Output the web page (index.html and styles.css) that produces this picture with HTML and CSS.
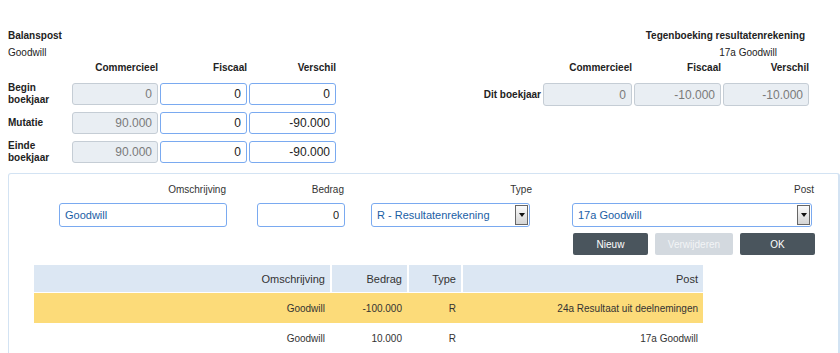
FILE: index.html
```html
<!DOCTYPE html>
<html>
  <head>
    <title>Balanspost</title>
    <link rel="stylesheet" href="styles.css">
  </head>
  <body>
    <div class="top">
      <div class="balans">
        <div class="title">Balanspost</div>
        <div class="sub">Goodwill</div>
        <div class="grid">
          <span></span>
          <span class="colhead">Commercieel</span>
          <span class="colhead">Fiscaal</span>
          <span class="colhead">Verschil</span>

          <span class="rowlabel">Begin boekjaar</span>
          <input class="field ro" value="0" readonly>
          <input class="field" value="0">
          <input class="field" value="0">

          <span class="rowlabel">Mutatie</span>
          <input class="field ro" value="90.000" readonly>
          <input class="field" value="0">
          <input class="field" value="-90.000">

          <span class="rowlabel">Einde boekjaar</span>
          <input class="field ro" value="90.000" readonly>
          <input class="field" value="0">
          <input class="field" value="-90.000">
        </div>
      </div>

      <div class="tegen">
        <div class="title right">Tegenboeking resultatenrekening</div>
        <div class="sub right post-name">17a Goodwill</div>
        <div class="grid grid-right">
          <span></span>
          <span class="colhead">Commercieel</span>
          <span class="colhead">Fiscaal</span>
          <span class="colhead">Verschil</span>

          <span class="rowlabel single">Dit boekjaar</span>
          <input class="field ro" value="0" readonly>
          <input class="field ro" value="-10.000" readonly>
          <input class="field ro" value="-10.000" readonly>
        </div>
      </div>
    </div>

    <div class="panel">
      <div class="form-row">
        <div class="form-group f-omschrijving">
          <label for="omschrijving">Omschrijving</label>
          <input type="text" id="omschrijving" class="text-input" value="Goodwill">
        </div>
        <div class="form-group f-bedrag">
          <label for="bedrag">Bedrag</label>
          <input type="text" id="bedrag" class="text-input num" value="0">
        </div>
        <div class="form-group f-type">
          <label>Type</label>
          <div class="select">
            <span class="select-value">R - Resultatenrekening</span>
            <span class="select-btn"><span class="arrow"></span></span>
          </div>
        </div>
        <div class="form-group f-post">
          <label>Post</label>
          <div class="select">
            <span class="select-value">17a Goodwill</span>
            <span class="select-btn"><span class="arrow"></span></span>
          </div>
        </div>
      </div>

      <div class="btns">
        <button class="btn">Nieuw</button>
        <button class="btn disabled" disabled>Verwijderen</button>
        <button class="btn">OK</button>
      </div>

      <table class="posts">
        <thead>
          <tr>
            <th class="c-oms">Omschrijving</th>
            <th class="c-bed">Bedrag</th>
            <th class="c-type">Type</th>
            <th class="c-post">Post</th>
          </tr>
        </thead>
        <tbody>
          <tr class="selected">
            <td>Goodwill</td>
            <td>-100.000</td>
            <td>R</td>
            <td>24a Resultaat uit deelnemingen</td>
          </tr>
          <tr>
            <td>Goodwill</td>
            <td>10.000</td>
            <td>R</td>
            <td>17a Goodwill</td>
          </tr>
        </tbody>
      </table>
    </div>
  </body>
</html>
```

FILE: styles.css
```css
body {
  font-family: "Liberation Sans", Arial, sans-serif;
  margin: 0;
  padding: 0;
  background-color: #fff;
  color: #222;
  overflow: hidden;
}

.top {
  display: flex;
  justify-content: space-between;
  padding: 28px 31px 0 8px;
}

.title {
  font-size: 10px;
  font-weight: bold;
  line-height: 16px;
  height: 17px;
}
.sub {
  font-size: 10px;
  line-height: 16px;
  height: 17px;
}
.right {
  text-align: right;
  padding-right: 4px;
}
.post-name {
  padding-right: 32px;
}

.grid {
  display: grid;
  grid-template-columns: 62px 86px 87px 87px;
  grid-template-rows: 13px 22px 22px 22px;
  column-gap: 2px;
  row-gap: 7px;
  margin-top: 1px;
}
.grid-right {
  grid-template-columns: 58px 89px 87px 86px;
  grid-template-rows: 13px 23px;
}

.colhead {
  font-size: 10px;
  font-weight: bold;
  text-align: right;
  line-height: 13px;
  margin-top: -2px;
}
.rowlabel {
  font-size: 10px;
  font-weight: bold;
  line-height: 12px;
  align-self: center;
}
.rowlabel.single {
  text-align: right;
}

.field {
  box-sizing: border-box;
  width: 100%;
  height: 100%;
  margin: 0;
  border: 1px solid #7aaaf0;
  border-radius: 3px;
  background: #fff;
  font-family: inherit;
  font-size: 12px;
  color: #222;
  text-align: right;
  padding: 0 5px;
  outline: none;
}
.field.ro {
  background-color: #e9eef3;
  border-color: #c5cdd5;
  color: #7a7a7a;
}

.panel {
  margin: 10px 0 0 8px;
  border: 1px solid #d3e3f3;
  border-right-width: 2px;
  border-bottom: none;
  border-radius: 3px 3px 0 0;
  padding: 9px 0 20px 0;
}

.form-row {
  display: flex;
  padding-left: 50px;
}
.form-group {
  display: flex;
  flex-direction: column;
}
.form-group > label {
  font-size: 10px;
  line-height: 14px;
  text-align: right;
  color: #333;
  margin-bottom: 6px;
  margin-right: 1px;
}
.f-omschrijving { width: 168px; }
.f-bedrag { width: 88px; margin-left: 30px; }
.f-type { width: 159px; margin-left: 26px; }
.f-post { width: 240px; margin-left: 42px; }
.f-type > label,
.f-post > label {
  margin-right: -2px;
}

.text-input {
  box-sizing: border-box;
  height: 24px;
  margin: 0;
  border: 1px solid #7aaaf0;
  border-radius: 3px;
  font-family: inherit;
  font-size: 11px;
  color: #1b5ea5;
  padding: 0 5px;
  outline: none;
}
.text-input.num {
  text-align: right;
  color: #222;
}

.select {
  box-sizing: border-box;
  height: 24px;
  border: 1px solid #7aaaf0;
  border-radius: 3px;
  display: flex;
  align-items: stretch;
  padding: 1px;
}
.select-value {
  flex: 1;
  font-size: 11px;
  line-height: 20px;
  color: #1b5ea5;
  padding-left: 4px;
}
.select-btn {
  box-sizing: border-box;
  width: 13px;
  border: 1px solid #666;
  background: linear-gradient(#fbfbfb, #d4d4d4);
  display: flex;
  align-items: center;
  justify-content: center;
}
.arrow {
  width: 0;
  height: 0;
  border-left: 3px solid transparent;
  border-right: 3px solid transparent;
  border-top: 4px solid #111;
}

.btns {
  display: flex;
  justify-content: flex-end;
  gap: 7px;
  margin: 6px 23px 0 0;
}
.btn {
  height: 22px;
  width: 75px;
  border: none;
  border-radius: 2px;
  background-color: #4a555d;
  color: #fff;
  font-family: inherit;
  font-size: 10px;
  padding: 0;
  cursor: pointer;
}
.btn.disabled {
  width: 78px;
  background-color: #d3d9df;
  color: #f2f4f6;
  cursor: default;
}

table.posts {
  margin: 10px 0 0 25px;
  width: 669px;
  border-collapse: separate;
  border-spacing: 0;
  table-layout: fixed;
}
.posts th {
  background-color: #dce7f3;
  font-weight: normal;
  font-size: 11px;
  color: #333;
  text-align: right;
  height: 27px;
  padding: 0 5px 0 0;
  border-left: 2px solid #fff;
  border-bottom: 1px solid #fff;
}
.posts th:first-child {
  border-left: none;
}
.c-oms { width: 291px; }
.c-bed { width: 70px; }
.c-type { width: 47px; }
.posts td {
  font-size: 10px;
  color: #333;
  text-align: right;
  height: 30px;
  padding: 0 5px 0 0;
}
.posts tr.selected td {
  background-color: #fcdb79;
}
```
